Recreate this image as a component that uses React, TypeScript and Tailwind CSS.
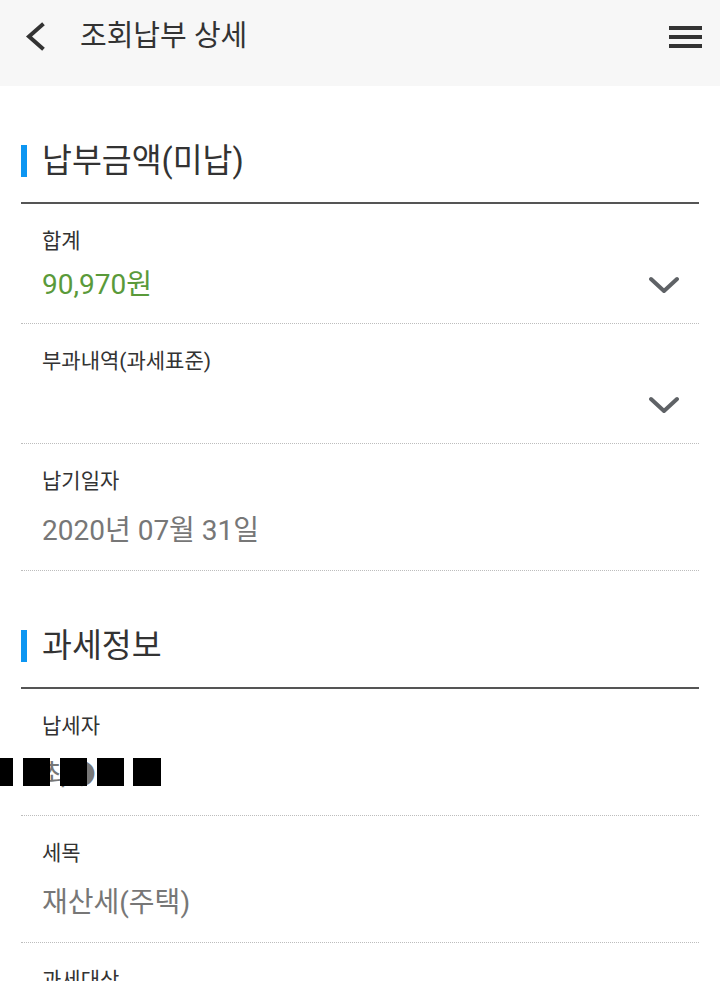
import { ReactNode } from 'react';

const FONT = { fontFamily: 'Roboto, "Noto Sans CJK KR", sans-serif' };

function ChevronDown() {
    return (
        <svg width="30" height="18" viewBox="0 0 30 18" className="shrink-0">
            <path d="M2 3 L15 15 L28 3" fill="none" stroke="#5f6266" strokeWidth="4" strokeLinecap="round" strokeLinejoin="round" />
        </svg>
    );
}

function SectionTitle({ title }: { title: string }) {
    return (
        <div className="mt-[55px] pb-[21px] border-b-2 border-[#555555] flex items-center h-[40px] box-content">
            <div className="w-[6px] h-[32px] bg-[#0d96f2]" />
            <h2 className="ml-[15px] text-[32.5px] leading-[40px] text-[#333333]">{title}</h2>
        </div>
    );
}

function ExpandRow({ label, value }: { label: string; value?: string }) {
    return (
        <div className="pl-[21px] pr-[20px] pt-[24px] pb-[20px] border-b border-dotted border-[#bdbdbd]">
            <div className="text-[21px] leading-[26px] text-[#333333]">{label}</div>
            <div className="mt-[13px] h-[36px] flex items-center justify-between">
                <span className="text-[28px] leading-[36px] text-[#5a9a3a]">{value}</span>
                <ChevronDown />
            </div>
        </div>
    );
}

function InfoRow({ label, children }: { label: string; children: ReactNode }) {
    return (
        <div className="px-[21px] pt-[24px] pb-[21px] border-b border-dotted border-[#bdbdbd]">
            <div className="text-[21px] leading-[26px] text-[#333333]">{label}</div>
            <div className="mt-[19px] h-[36px] text-[28px] leading-[36px] text-[#777777]">{children}</div>
        </div>
    );
}

export default function App() {
    return (
        <div className="relative w-[720px] h-[981px] overflow-hidden bg-white" style={FONT}>
            <header className="h-[86px] bg-[#f7f7f7] flex items-center pb-[12px]">
                <svg width="24" height="30" viewBox="0 0 24 30" className="ml-[24px]">
                    <path d="M18 3 L5 14.5 L18 26" fill="none" stroke="#333333" strokeWidth="4" strokeLinecap="square" />
                </svg>
                <h1 className="ml-[32px] text-[29px] text-[#333333]">조회납부 상세</h1>
                <div className="ml-auto mr-[18px] flex flex-col gap-[5px]">
                    <div className="w-[33px] h-[4px] bg-[#333333]" />
                    <div className="w-[33px] h-[4px] bg-[#333333]" />
                    <div className="w-[33px] h-[4px] bg-[#333333]" />
                </div>
            </header>

            <main className="mx-[21px]">
                <SectionTitle title="납부금액(미납)" />
                <ExpandRow label="합계" value="90,970원" />
                <ExpandRow label="부과내역(과세표준)" />
                <InfoRow label="납기일자">2020년 07월 31일</InfoRow>

                <SectionTitle title="과세정보" />
                <InfoRow label="납세자">최●</InfoRow>
                <InfoRow label="세목">재산세(주택)</InfoRow>
                <InfoRow label="과세대상">&nbsp;</InfoRow>
            </main>

            {/* redaction marks over the name */}
            <div className="absolute left-0 top-[758px] flex">
                <div className="w-[13px] h-[28px] bg-black" />
                <div className="ml-[10px] w-[27px] h-[28px] bg-black" />
                <div className="ml-[10px] w-[27px] h-[28px] bg-black" />
                <div className="ml-[10px] w-[27px] h-[28px] bg-black" />
                <div className="ml-[9px] w-[28px] h-[28px] bg-black" />
            </div>
        </div>
    );
}
